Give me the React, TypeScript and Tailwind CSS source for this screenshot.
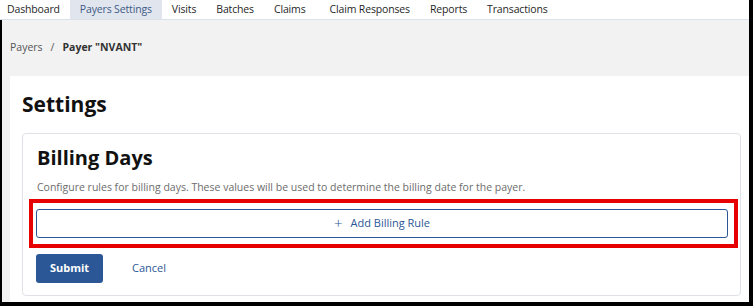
const NAV_ITEMS = [
  "Dashboard",
  "Payers Settings",
  "Visits",
  "Batches",
  "Claims",
  "Claim Responses",
  "Reports",
  "Transactions",
];

function TopNav() {
  return (
    <nav className="flex h-[20px] shrink-0 border-b border-[#dbe1ea] bg-white text-[10.5px] leading-[19px] tracking-[-0.15px] text-[#1f1f1f]">
      <div className="-ml-[3px] flex">
        {NAV_ITEMS.map((item) => (
          <span
            key={item}
            className={
              item === "Payers Settings"
                ? "bg-[#e1e6ee] px-[10px] text-[#3d5a86]"
                : item === "Claims"
                  ? "pl-[10px] pr-[14px]"
                  : "px-[10px]"
            }
          >
            {item}
          </span>
        ))}
      </div>
    </nav>
  );
}

export default function App() {
  return (
    <div className="flex h-[306px] w-[753px] flex-col overflow-hidden border-b-4 border-r-4 border-black bg-[#f2f2f2] font-['Open_Sans',sans-serif]">
      <TopNav />

      <main className="flex flex-1 flex-col overflow-hidden border-l-2 border-black pl-[8px]">
        <div className="flex h-[56px] shrink-0 items-center gap-[8px] text-[10.5px]">
          <span className="text-[#555]">Payers</span>
          <span className="text-[#555]">/</span>
          <span className="font-bold text-[#333]">Payer "NVANT"</span>
        </div>

        <section className="flex-1 bg-white pl-[12px] pr-[8px] pt-[14px]">
          <h1 className="mb-[15px] text-[21px] font-bold leading-[28px] text-[#111]">Settings</h1>

          <div className="rounded-[4px] border border-[#dee2e6] pb-[12px] pl-[14px] pr-[11px] pt-[11px]">
            <h2 className="text-[20px] font-bold leading-[26px] text-[#111]">Billing Days</h2>
            <p className="mt-[8px] text-[10.5px] leading-[16px] text-[#6c6c6c]">
              Configure rules for billing days. These values will be used to determine the billing date for the payer.
            </p>

            <div className="relative mt-[14px]">
              <button
                type="button"
                className="-ml-[1px] flex h-[29px] w-full items-center justify-center gap-[8px] rounded-[3px] border border-[#2b5796] bg-white text-[11px] text-[#2b5796]"
              >
                <span className="text-[15px] font-light leading-none">+</span>
                <span>Add Billing Rule</span>
              </button>
              <div className="pointer-events-none absolute -bottom-[10px] -left-[8px] -right-[9px] -top-[10px] border-4 border-[#e60000]" />
            </div>

            <div className="mt-[16px] flex items-center gap-[10px]">
              <button
                type="button"
                className="-ml-[1px] h-[29px] w-[67px] rounded-[3px] bg-[#2b5796] text-[11px] font-bold text-white"
              >
                Submit
              </button>
              <button type="button" className="h-[29px] px-[19px] text-[11px] text-[#2b5796]">
                Cancel
              </button>
            </div>
          </div>
        </section>
      </main>
    </div>
  );
}
